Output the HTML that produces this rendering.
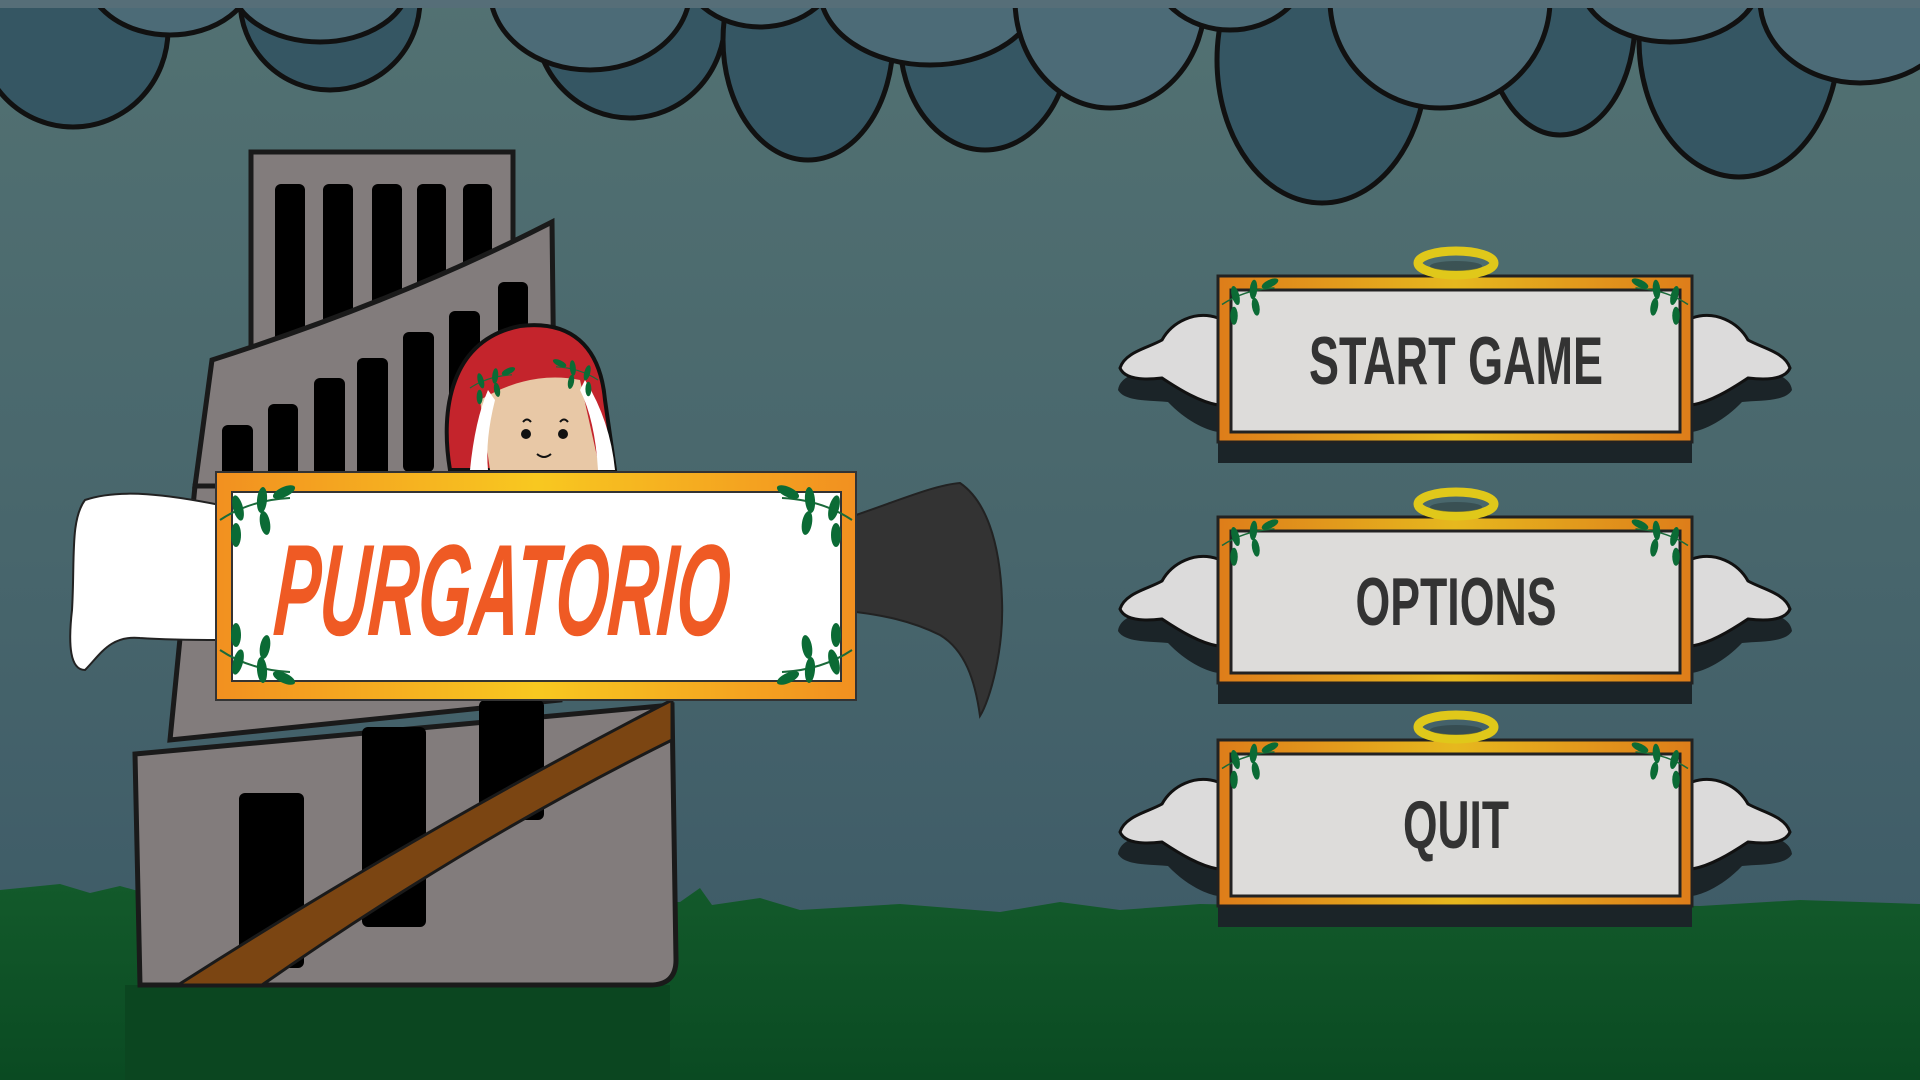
<!DOCTYPE html>
<html><head><meta charset="utf-8"><style>
html,body{margin:0;padding:0;width:1920px;height:1080px;overflow:hidden;background:#4a6670}
svg{display:block}
</style></head><body>
<svg width="1920" height="1080" viewBox="0 0 1920 1080" xmlns="http://www.w3.org/2000/svg">
<defs>
<linearGradient id="sky" x1="0" y1="0" x2="0" y2="1">
<stop offset="0" stop-color="#527172"/><stop offset="0.5" stop-color="#48666c"/><stop offset="1" stop-color="#3b5866"/>
</linearGradient>
<linearGradient id="grass" x1="0" y1="0" x2="0" y2="1">
<stop offset="0" stop-color="#135a2b"/><stop offset="1" stop-color="#0a4a22"/>
</linearGradient>
<linearGradient id="frame" x1="0" y1="0" x2="1" y2="0">
<stop offset="0" stop-color="#de7d1a"/><stop offset="0.5" stop-color="#e6b81e"/><stop offset="1" stop-color="#de7d1a"/>
</linearGradient>
<linearGradient id="tframe" x1="0" y1="0" x2="1" y2="0">
<stop offset="0" stop-color="#f29020"/><stop offset="0.5" stop-color="#f8c820"/><stop offset="1" stop-color="#f29020"/>
</linearGradient>
<g id="leafL">
<path d="M0 30 Q30 10 70 8" stroke="#1a6a3a" stroke-width="2" fill="none"/>
<ellipse cx="18" cy="18" rx="5" ry="13" fill="#0b6b35" transform="rotate(-15 18 18)"/>
<ellipse cx="42" cy="10" rx="5" ry="13" fill="#0b6b35" transform="rotate(5 42 10)"/>
<ellipse cx="45" cy="33" rx="5" ry="12" fill="#0b6b35" transform="rotate(-10 45 33)"/>
<ellipse cx="64" cy="2" rx="12" ry="5" fill="#0b6b35" transform="rotate(-25 64 2)"/>
<ellipse cx="16" cy="45" rx="5" ry="12" fill="#0b6b35"/>
</g>
<g id="btn">
<path d="M1218 335 C1190 335 1170 350 1160 365 C1140 372 1120 375 1118 390 C1125 402 1150 400 1168 402 C1185 420 1205 430 1218 432 Z" fill="#1b2428"/>
<path d="M1692 335 C1720 335 1740 350 1750 365 C1770 372 1790 375 1792 390 C1785 402 1760 400 1742 402 C1725 420 1705 430 1692 432 Z" fill="#1b2428"/>
<path d="M1218 318 C1195 310 1172 322 1162 340 C1148 348 1125 352 1120 368 C1125 380 1145 380 1162 378 C1180 390 1200 402 1218 405 Z" fill="#dcdbdb" stroke="#111" stroke-width="3"/>
<path d="M1692 318 C1715 310 1738 322 1748 340 C1762 348 1785 352 1790 368 C1785 380 1765 380 1748 378 C1730 390 1710 402 1692 405 Z" fill="#dcdbdb" stroke="#111" stroke-width="3"/>
<rect x="1218" y="430" width="474" height="33" fill="#1b2428"/>
<rect x="1218" y="276" width="474" height="166" fill="url(#frame)" stroke="#222" stroke-width="3"/>
<rect x="1231" y="290" width="449" height="142" fill="#dddcda" stroke="#222" stroke-width="3"/>
<ellipse cx="1456" cy="263" rx="38" ry="12" fill="none" stroke="#e0c81a" stroke-width="9"/>
<ellipse cx="1456" cy="266" rx="26" ry="5" fill="#2a3a3a" opacity="0.5"/>
<use href="#leafL" transform="translate(1222,282) scale(0.75)"/>
<use href="#leafL" transform="translate(1688,282) scale(-0.75,0.75)"/>
</g>
</defs>

<rect width="1920" height="1080" fill="url(#sky)"/>

<g fill="#355663" stroke="#111" stroke-width="5">
<ellipse cx="73" cy="30" rx="95" ry="97"/>
<ellipse cx="330" cy="0" rx="90" ry="90"/>
<ellipse cx="630" cy="20" rx="95" ry="98"/>
<ellipse cx="808" cy="40" rx="85" ry="120"/>
<ellipse cx="985" cy="40" rx="85" ry="110"/>
<ellipse cx="1322" cy="60" rx="105" ry="143"/>
<ellipse cx="1560" cy="20" rx="75" ry="115"/>
<ellipse cx="1739" cy="40" rx="100" ry="137"/>
</g>
<g fill="#4c6b77" stroke="#111" stroke-width="5">
<ellipse cx="170" cy="-30" rx="85" ry="65"/>
<ellipse cx="320" cy="-20" rx="90" ry="62"/>
<ellipse cx="590" cy="-10" rx="100" ry="80"/>
<ellipse cx="760" cy="-40" rx="80" ry="67"/>
<ellipse cx="930" cy="-10" rx="110" ry="75"/>
<ellipse cx="1110" cy="0" rx="95" ry="108"/>
<ellipse cx="1230" cy="-40" rx="80" ry="70"/>
<ellipse cx="1440" cy="0" rx="110" ry="108"/>
<ellipse cx="1670" cy="-20" rx="90" ry="62"/>
<ellipse cx="1860" cy="0" rx="100" ry="83"/>
</g>
<rect x="0" y="0" width="1920" height="8" fill="#566e78"/>

<path d="M0 890 L60 884 L90 893 L120 886 L160 897 L220 890 L300 896 L680 902 L700 888 L712 905 L760 898 L800 910 L900 904 L1000 912 L1060 902 L1120 910 L1200 904 L1400 908 L1500 902 L1700 906 L1800 900 L1920 904 L1920 1080 L0 1080 Z" fill="url(#grass)"/>
<rect x="125" y="985" width="545" height="95" fill="#0b4620"/>

<rect x="251" y="152" width="262" height="260" fill="#827c7c" stroke="#1a1a1a" stroke-width="5"/>
<g fill="#000">
<rect x="275" y="184" width="30" height="200" rx="6"/>
<rect x="323" y="184" width="30" height="180" rx="6"/>
<rect x="372" y="184" width="30" height="160" rx="6"/>
<rect x="417" y="184" width="29" height="140" rx="6"/>
<rect x="463" y="184" width="29" height="110" rx="6"/>
</g>
<path d="M212 360 Q400 300 552 222 L555 486 L195 486 Z" fill="#827c7c" stroke="#1a1a1a" stroke-width="5"/>
<path d="M195 486 L560 486 L560 700 L170 740 Z" fill="#827c7c" stroke="#1a1a1a" stroke-width="5"/>
<g fill="#000">
<rect x="222" y="425" width="31" height="60" rx="6"/>
<rect x="268" y="404" width="30" height="80" rx="6"/>
<rect x="314" y="378" width="31" height="100" rx="6"/>
<rect x="357" y="358" width="31" height="120" rx="6"/>
<rect x="403" y="332" width="31" height="140" rx="6"/>
<rect x="449" y="311" width="31" height="160" rx="6"/>
<rect x="498" y="282" width="30" height="190" rx="6"/>
</g>
<path d="M135 754 Q400 730 672 705 L676 960 Q676 985 650 985 L140 985 Z" fill="#827c7c" stroke="#1a1a1a" stroke-width="5"/>
<g fill="#000">
<rect x="239" y="793" width="65" height="175" rx="6"/>
<rect x="362" y="727" width="64" height="200" rx="6"/>
<rect x="479" y="700" width="65" height="120" rx="6"/>
</g>
<path d="M178 985 L262 985 Q470 840 672 740 L672 700 Q420 830 178 985 Z" fill="#7b4512" stroke="#1a1a1a" stroke-width="3"/>

<path d="M450 470 C440 410 450 340 520 326 C570 320 600 345 605 400 L615 470 Z" fill="#c4242c" stroke="#111" stroke-width="4"/>
<path d="M490 470 L480 400 Q530 370 580 380 L600 470 Z" fill="#e8c8a6"/>
<path d="M470 470 Q475 420 488 390 L495 400 Q485 440 488 470 Z" fill="#fff"/>
<path d="M585 380 Q610 420 615 470 L598 470 Q595 420 580 390 Z" fill="#fff"/>
<circle cx="526" cy="434" r="5" fill="#111"/><circle cx="563" cy="434" r="5" fill="#111"/>
<path d="M523 422 q4 -5 8 0 M560 422 q4 -5 8 0" stroke="#111" stroke-width="2" fill="none"/>
<path d="M537 454 q7 6 14 0" stroke="#111" stroke-width="2" fill="none"/>
<use href="#leafL" transform="translate(470,370) scale(0.6)"/>
<use href="#leafL" transform="translate(598,362) scale(-0.6,0.6)"/>

<path d="M220 505 C170 495 120 488 85 500 C70 520 75 560 72 610 C68 645 70 670 85 670 C100 655 110 635 140 638 C170 640 200 640 220 640 Z" fill="#fff" stroke="#222" stroke-width="2"/>
<path d="M856 515 C900 500 935 485 960 483 C985 500 1000 540 1002 600 C1004 650 990 700 980 716 C975 680 965 650 940 635 C910 620 880 615 856 612 Z" fill="#333" stroke="#222" stroke-width="2"/>

<rect x="216" y="472" width="640" height="228" fill="url(#tframe)" stroke="#333" stroke-width="2"/>
<rect x="232" y="492" width="609" height="189" fill="#fff" stroke="#333" stroke-width="2"/>
<use href="#leafL" transform="translate(220,490)"/>
<use href="#leafL" transform="translate(852,490) scale(-1,1)"/>
<use href="#leafL" transform="translate(220,680) scale(1,-1)"/>
<use href="#leafL" transform="translate(852,680) scale(-1,-1)"/>
<text x="544" y="635" text-anchor="middle" font-family="Liberation Sans, sans-serif" font-style="italic" font-weight="bold" font-size="130" fill="#ef5a24" textLength="455" lengthAdjust="spacingAndGlyphs" transform="skewX(-4)">PURGATORIO</text>

<use href="#btn"/>
<use href="#btn" transform="translate(0,241)"/>
<use href="#btn" transform="translate(0,464)"/>
<g font-family="Liberation Sans, sans-serif" font-weight="bold" font-size="68" fill="#333" text-anchor="middle">
<text x="1456" y="384" textLength="294" lengthAdjust="spacingAndGlyphs">START GAME</text>
<text x="1456" y="625" textLength="201" lengthAdjust="spacingAndGlyphs">OPTIONS</text>
<text x="1456" y="848" textLength="106" lengthAdjust="spacingAndGlyphs">QUIT</text>
</g>
</svg>
</body></html>
